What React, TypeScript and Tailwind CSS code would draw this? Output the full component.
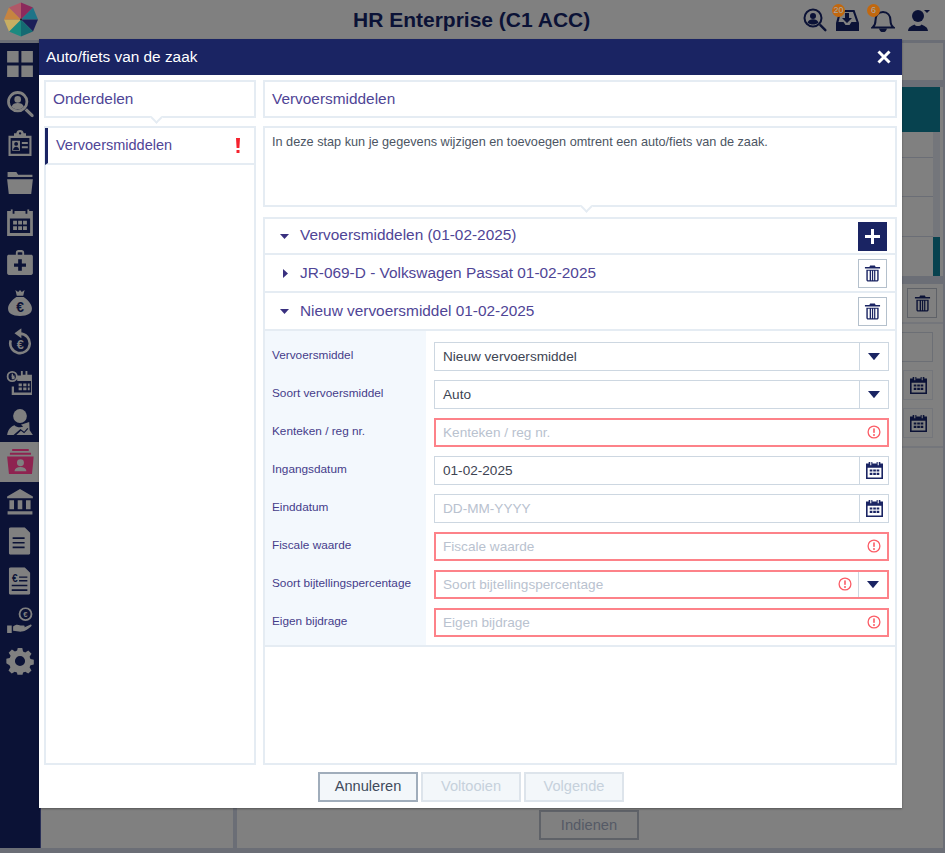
const NAVY = "#1a2463";

function Trash({ color = NAVY, size = 17 }: { color?: string; size?: number }) {
  return (
    <svg width={size} height={size} viewBox="0 0 18 18" fill={color}>
      <path d="M6.500 0.500h5l.8 1.700H17v1.600H1V2.200h4.700z" />
      <path d="M2.500 5h13v10.500c0 1.200-.8 2-2 2h-9c-1.200 0-2-.8-2-2zM4 6.200v9.300c0 .4.200.7.600.7H6V6.200zM7.400 6.200v10h1V6.200zM9.700 6.200v10h1V6.200zM12 6.200v10h1.400c.4 0 .6-.3.600-.7V6.200z" fillRule="evenodd" />
    </svg>
  );
}

function Calendar({ size = 17, color = NAVY }: { size?: number; color?: string }) {
  return (
    <svg width={size} height={size} viewBox="0 0 16 16" fill={color}>
      <path fillRule="evenodd" d="M0 1.500h2.500V0H4v3h1V0h1v1.500h4V0h1v3h1V0h1.500v1.500H16V16H0zM1.500 5.500v9h13v-9z" />
      <path d="M3.500 7h2.500v2H3.500zM6.800 7h2.500v2H6.800zM10 7h2.500v2H10zM3.500 10.200h2.500v2H3.500zM6.800 10.200h2.500v2H6.800zM10 10.200h2.500v2H10z" />
    </svg>
  );
}

function AlertCircle() {
  return (
    <svg width="14" height="14" viewBox="0 0 14 14" className="shrink-0 -mt-[1px]">
      <circle cx="7" cy="7" r="5.900" fill="none" stroke="#fb5c66" strokeWidth="1.300" />
      <rect x="6.200" y="3.200" width="1.600" height="4.800" rx="0.700" fill="#fb5c66" />
      <circle cx="7" cy="9.900" r="1" fill="#fb5c66" />
    </svg>
  );
}

function CaretDown({ size = 12 }: { size?: number }) {
  return (
    <svg width={size} height={size * 0.6} viewBox="0 0 10 6" fill={NAVY}>
      <path d="M0 0h10L5 6z" />
    </svg>
  );
}

const logoColors = ["#8c2a5c", "#1e7488", "#1c1f58", "#146a72", "#1c8a80", "#c8ae62", "#c68440", "#b05868"];

function Logo() {
  const cx = 21;
  const cy = 20.500;
  const r = 17;
  return (
    <svg width="42" height="42" viewBox="0 0 42 42">
      {logoColors.map((fill, i) => {
        const a1 = ((i * 45 - 90) * Math.PI) / 180;
        const a2 = (((i + 1) * 45 - 90) * Math.PI) / 180;
        const d = `M${cx} ${cy}L${cx + r * Math.cos(a1)} ${cy + r * Math.sin(a1)}L${cx + r * Math.cos(a2)} ${cy + r * Math.sin(a2)}Z`;
        return <path key={i} d={d} fill={fill} />;
      })}
      <circle cx={cx} cy={cy} r="1" fill="#222" />
    </svg>
  );
}

const G = "#808080";

function SideIcon({ id }: { id: number }) {
  const s = { width: 30, height: 30, viewBox: "0 0 30 30", fill: G };
  switch (id) {
    case 0:
      return (
        <svg {...s}>
          <path d="M1 1h12.500v12.500H1zM16.500 1H29v12.500H16.500zM1 16.500h12.500V29H1zM16.500 16.500H29V29H16.500z" />
        </svg>
      );
    case 1:
      return (
        <svg {...s}>
          <circle cx="12.500" cy="12.500" r="10" fill="none" stroke={G} strokeWidth="3" />
          <circle cx="12.500" cy="10" r="3.600" />
          <path d="M5.800 18c1-3 3.500-4 6.700-4s5.700 1 6.700 4c-1.800 1.800-4 2.800-6.700 2.800S7.600 19.800 5.800 18z" />
          <path d="M20 22l2.500-2.500 7 7c.7.700.7 1.700 0 2.400s-1.700.7-2.400 0z" />
        </svg>
      );
    case 2:
      return (
        <svg {...s}>
          <path
            fillRule="evenodd"
            d="M11 4.500C11 2 13 .8 15 .8S19 2 19 4.500h2.500V7h6V29H2.500V7h6V4.500zM13.800 4.500a1.300 1.300 0 1 0 2.600 0 1.300 1.300 0 1 0-2.600 0zM4.800 9.500v17.200h20.400V9.500z"
          />
          <path d="M6.500 12.500h8.500v11H6.500zM17 14h6.500v2.200H17zM17 18.500h6.500v2.200H17z" />
          <circle cx="10.800" cy="16" r="2.100" fill="#0b1236" />
          <path d="M7.500 22.500c.3-2.500 1.800-3.500 3.300-3.500s3 1 3.300 3.500z" fill="#0b1236" />
        </svg>
      );
    case 3:
      return (
        <svg {...s}>
          <path d="M1.500 3h9.500l2 3h15.500v2.500H1.500zM1 11h28l-1.800 16H2.800z" />
        </svg>
      );
    case 4:
      return (
        <svg {...s}>
          <path fillRule="evenodd" d="M1 2h4V0h2v5h2V2h12v3h2V0h2v2h4v27H1zM4 10v16h22V10z" />
          <path d="M7.500 12.500h4.200v4H7.500zM13 12.500h4.200v4H13zM18.300 12.500h4.200v4h-4.200zM7.500 18.500h4.200v4H7.500zM13 18.500h4.200v4H13zM18.300 18.500h4.200v4h-4.200z" />
        </svg>
      );
    case 5:
      return (
        <svg {...s}>
          <path
            fillRule="evenodd"
            d="M10.500 6V3.500C10.500 1.500 12 1 15 1s4.500.5 4.500 2.500V6H27c1.300 0 2 .8 2 2v18c0 1.300-.8 2-2 2H3c-1.300 0-2-.8-2-2V8c0-1.300.8-2 2-2zM12.500 6h5V3.600c-1.500-.4-3.500-.4-5 0zM13 11v4.500H8.500V19H13v4.500h4V19h4.500v-3.500H17V11z"
          />
        </svg>
      );
    case 6:
      return (
        <svg {...s}>
          <path d="M10 1l3 2 2-2 2 2 3-2-1.500 6h-7zM11 8.500h8C24 12 28 16.500 28 21c0 5.500-4.500 8-13 8S2 26.500 2 21c0-4.500 4-9 9-12.500z" />
          <text x="15" y="25" textAnchor="middle" fontSize="15" fontWeight="700" fontFamily="Liberation Sans, sans-serif" fill="#0b1236">€</text>
        </svg>
      );
    case 7:
      return (
        <svg {...s}>
          <path d="M15 4.500a12 12 0 1 1-11.400 8.200l2.700.9A9.200 9.200 0 1 0 15 7.300z" />
          <path d="M16.500 0v11L9 5.500z" />
          <text x="15.500" y="22.500" textAnchor="middle" fontSize="14" fontWeight="700" fontFamily="Liberation Sans, sans-serif" fill={G}>€</text>
        </svg>
      );
    case 8:
      return (
        <svg {...s}>
          <path fillRule="evenodd" d="M6 8h3v4h2V8h5V3h2v4h3V3h2v4h5v22H6v-9h2.500v6.500h18.500V14H12v-2H6z" />
          <path d="M13.500 16.500h3.500v3h-3.500zM18.500 16.500h3.500v3h-3.500zM23.500 16.500h2v3h-2zM13.500 21h3.500v3h-3.500zM18.500 21h3.500v3h-3.500zM23.500 21h2v3h-2z" />
          <path fillRule="evenodd" d="M6.500 3a6 6 0 1 1 0 12 6 6 0 0 1 0-12zM6.500 5a4 4 0 1 0 0 8 4 4 0 0 0 0-8zM6 6h1.400v3l2 1.200-.7 1.100L6 9.700z" />
        </svg>
      );
    case 9:
      return (
        <svg {...s}>
          <circle cx="15" cy="8.500" r="7.500" />
          <path d="M1 29c1-6 4-9 8-10.500 1.500 1.500 3.500 2.200 6 2.200 1.500 0 2.500-.3 3.500-.7L16 18l9-3 .5 9-2.500-2.500-3.500 4-4-3L8 29zM11 29l5-4.500 3.500 2.800 4.800-5.300L29 29z" />
        </svg>
      );
    case 10:
      return (
        <svg width={30} height={30} viewBox="0 0 30 30">
          <path d="M6.500 1h18v2h-18zM4 5h23v2.200H4z" fill="#8e2350" />
          <path
            fillRule="evenodd"
            fill="#8e2350"
            d="M1 9h29l-2 19H3zM15.500 12a3.800 3.800 0 1 0 0 7.600 3.800 3.800 0 0 0 0-7.600zM9 25c.3-3 3-4.500 6.500-4.500S21.700 22 22 25z"
          />
        </svg>
      );
    case 11:
      return (
        <svg {...s}>
          <path d="M15 1l14 8v2H1V9zM3.500 13h5v10h-5zM12.500 13h5v10h-5zM21.500 13h5v10h-5zM1.500 25h27v3.500h-27z" />
        </svg>
      );
    case 12:
      return (
        <svg {...s}>
          <path fillRule="evenodd" d="M5 0h15l6 6v22c0 1.200-.8 2-2 2H5c-1.200 0-2-.8-2-2V2c0-1.200.8-2 2-2zM7 11v1.800h13V11zM7 16v1.800h13V16zM7 21v1.800h13V21z" />
        </svg>
      );
    case 13:
      return (
        <svg {...s}>
          <path fillRule="evenodd" d="M5 0h15l6 6v22c0 1.200-.8 2-2 2H5c-1.200 0-2-.8-2-2V2c0-1.200.8-2 2-2zM14 10v1.600h9V10zM14 14v1.600h9V14zM6 19v1.800h17V19zM6 24v1.800h17V24z" />
          <text x="9.500" y="16" textAnchor="middle" fontSize="11" fontWeight="700" fontFamily="Liberation Sans, sans-serif" fill="#0b1236">€</text>
        </svg>
      );
    case 14:
      return (
        <svg {...s}>
          <path fillRule="evenodd" d="M21 0a7.500 7.500 0 1 1 0 15 7.500 7.500 0 0 1 0-15zM21 2a5.500 5.500 0 1 0 0 11 5.500 5.500 0 0 0 0-11z" />
          <text x="21" y="11" textAnchor="middle" fontSize="8.500" fontWeight="700" fontFamily="Liberation Sans, sans-serif" fill={G}>€</text>
          <path d="M1 20h5v8H1zM7.500 21c3-2.500 5-2 8-1h3.500c1.500 0 1.500 2 0 2.200l-4 .3 5-.8 6-2.700c1.500-.5 2.300 1 1 2-3 2.500-6 5-10 5.500-3 .3-6-.5-9.500-.8z" />
        </svg>
      );
    default:
      return (
        <svg {...s}>
          <path
            fillRule="evenodd"
            d="M12.500 1h5l.8 3.800 2.400 1 3.300-2.100 3.500 3.500-2.100 3.300 1 2.400 3.800.8v5l-3.800.8-1 2.400 2.100 3.300-3.500 3.500-3.300-2.100-2.400 1-.8 3.800h-5l-.8-3.800-2.400-1-3.300 2.100-3.500-3.500 2.100-3.300-1-2.400L0 17.500v-5l3.800-.8 1-2.400L2.700 6l3.500-3.500 3.300 2.100 2.400-1zM15 9.500a5.500 5.500 0 1 0 0 11 5.500 5.500 0 0 0 0-11z"
          />
        </svg>
      );
  }
}

function Sidebar() {
  return (
    <div className="w-[41px] shrink-0 bg-[#0b1236] mt-[3px] mb-[5px] pt-[1px] flex flex-col border-r border-[#2a3058]">
      {Array.from({ length: 16 }).map((_, i) => (
        <div key={i} className={`h-[39.8px] flex items-center justify-center ${i === 10 ? "bg-[#808080]" : ""}`}>
          <div className="w-[28px] h-[28px] flex items-center justify-center overflow-hidden">
            <div className="scale-[0.92]">
              <SideIcon id={i} />
            </div>
          </div>
        </div>
      ))}
    </div>
  );
}

function HeaderIcons() {
  return (
    <div className="flex items-center pr-[14px]">
      <svg width="24" height="24" viewBox="0 0 24 24" fill="#0b1236" className="mr-[8px]">
        <circle cx="10" cy="10" r="8.500" fill="none" stroke="#0b1236" strokeWidth="2" />
        <circle cx="10" cy="8" r="3" />
        <path d="M4.500 14.500c1-2.500 3-3.200 5.500-3.200s4.500.7 5.500 3.200c-1.500 1.400-3.300 2-5.500 2s-4-.6-5.500-2z" />
        <path d="M16 17.500l1.700-1.700 5.500 5.500c.5.500.5 1.200 0 1.700s-1.200.5-1.700 0z" />
      </svg>
      <div className="relative w-[24px] h-[24px] mr-[12px]">
        <svg width="24" height="24" viewBox="0 0 24 24" fill="#0b1236">
          <path fillRule="evenodd" d="M4.500 2h15L24 15v8H1v-8zM6 4l-2.500 10h5l2 3h4l2-3h5L18 4z" />
          <path d="M10 5h4v5h3l-5 5-5-5h3z" />
        </svg>
        <span className="absolute -left-[3px] -top-[4px] w-[13px] h-[13px] rounded-full bg-[#c2680f] text-[9px] leading-[13px] text-center text-[#a8a8a8]">20</span>
      </div>
      <div className="relative w-[24px] h-[24px] mr-[12px]">
        <svg width="24" height="24" viewBox="0 0 24 24" fill="none" stroke="#0b1236" strokeWidth="2">
          <path d="M1.500 19.500c2-1.500 3-3.500 3-7 0-5 3-8.500 7.500-8.500s7.500 3.500 7.500 8.500c0 3.500 1 5.500 3 7z" />
          <path d="M9.500 21.500c.5 1.200 1.500 1.800 2.500 1.800s2-.6 2.500-1.800z" fill="#0b1236" />
        </svg>
        <span className="absolute -left-[4px] -top-[4px] w-[13px] h-[13px] rounded-full bg-[#c2680f] text-[9px] leading-[13px] text-center text-[#a8a8a8]">6</span>
      </div>
      <svg width="24" height="24" viewBox="0 0 24 24" fill="#0b1236">
        <circle cx="11" cy="8" r="6" />
        <path d="M1 23c.5-4.500 4-5 6.500-6.500.7 1 2 1.500 3.500 1.500s2.800-.5 3.500-1.500c2.500 1.500 6 2 6.500 6.500z" />
        <path d="M17 2h6l-3 3z" />
      </svg>
    </div>
  );
}

// the dimmed page behind the dialog
function PageBehind() {
  return (
    <div className="flex-1 flex flex-col min-w-0 mt-[3px] mb-[5px] mr-[2px]">
      <div className="h-[37px] shrink-0 bg-[#808080] mb-[7px]" />
      <div className="h-[45px] shrink-0 bg-[#808080] flex justify-end pr-[3px]">
        <div className="w-[720px] bg-[#07424f]" />
      </div>
      <div className="h-[144px] shrink-0 bg-[#808080] flex pr-[3px]">
        <div className="flex-1 flex flex-col">
          <div className="h-[26px] border-b border-[#6b6e76]" />
          <div className="h-[39px] border-b border-[#6b6e76]" />
          <div className="h-[40px] border-b border-[#6b6e76]" />
        </div>
        <div className="w-[7px] bg-[#74767b] flex flex-col justify-end">
          <div className="h-[39px] bg-[#07424f]" />
        </div>
      </div>
      <div className="h-[8px] shrink-0" />
      <div className="h-[40px] shrink-0 bg-[#808080] flex justify-end pt-[4px] pr-[6px] border-b-2 border-[#74767b]">
        <div className="w-[30px] h-[30px] border border-[#5f6268] flex items-center justify-center">
          <Trash color="#0b1236" />
        </div>
      </div>
      <div className="h-[124px] shrink-0 bg-[#808080] flex justify-end pt-[8px] pr-[10px] border-b-2 border-[#74767b]">
        <div className="w-[60px] flex flex-col gap-[8px] items-end">
          <div className="w-[60px] h-[30px] border border-[#6c6f75]" />
          <div className="w-[30px] h-[30px] border border-[#74767b] flex items-center justify-center">
            <Calendar color="#0b1236" />
          </div>
          <div className="w-[30px] h-[30px] border border-[#74767b] flex items-center justify-center">
            <Calendar color="#0b1236" />
          </div>
        </div>
      </div>
      <div className="flex-1 flex">
        <div className="w-[192px] bg-[#808080]" />
        <div className="w-[4px]" />
        <div className="flex-1 bg-[#808080] flex flex-col justify-end pb-[8px]">
          <div className="ml-[302px] w-[100px] h-[30px] border-2 border-[#5f6268] text-[14.700px] text-[#555a66] flex items-center justify-center">Indienen</div>
        </div>
      </div>
    </div>
  );
}

type Field = {
  label: string;
  value?: string;
  placeholder?: string;
  error?: boolean;
  select?: boolean;
  date?: boolean;
};

const fields: Field[] = [
  { label: "Vervoersmiddel", value: "Nieuw vervoersmiddel", select: true },
  { label: "Soort vervoersmiddel", value: "Auto", select: true },
  { label: "Kenteken / reg nr.", placeholder: "Kenteken / reg nr.", error: true },
  { label: "Ingangsdatum", value: "01-02-2025", date: true },
  { label: "Einddatum", placeholder: "DD-MM-YYYY", date: true },
  { label: "Fiscale waarde", placeholder: "Fiscale waarde", error: true },
  { label: "Soort bijtellingspercentage", placeholder: "Soort bijtellingspercentage", error: true, select: true },
  { label: "Eigen bijdrage", placeholder: "Eigen bijdrage", error: true },
];

function FieldRow({ f }: { f: Field }) {
  return (
    <div className="flex h-[38px] shrink-0">
      <div className="w-[161px] shrink-0 bg-[#f3f8fd] pl-[7px] pt-[4px] text-[11.800px] leading-[18px] text-[#453c8a]">{f.label}</div>
      <div className="flex-1 pl-[8px] pr-[6px] bg-white">
        <div className={`h-[29px] flex items-stretch bg-white ${f.error ? "border-2 border-[#fd8289]" : "border border-[#cdd7e1]"}`}>
          <div className={`flex-1 flex items-center pr-[6px] text-[13.600px] ${f.error ? "pl-[7px]" : "pl-[8px]"} ${f.value ? "text-[#3d4452]" : "text-[#b9c2cf]"}`}>
            <span className="flex-1 pt-[2px]">{f.value ?? f.placeholder}</span>
            {f.error && <AlertCircle />}
          </div>
          {f.select && (
            <div className="w-[29px] flex items-center justify-center border-l border-[#cdd7e1]">
              <CaretDown />
            </div>
          )}
          {f.date && (
            <div className="w-[29px] flex items-center justify-center border-l border-[#cdd7e1]">
              <Calendar />
            </div>
          )}
        </div>
      </div>
    </div>
  );
}

function AccordionRow({ title, open, plus, first }: { title: string; open: boolean; plus?: boolean; first?: boolean }) {
  return (
    <div className={`flex items-center border-b-2 border-[#e5ecf3] pl-[15px] pr-[8px] ${first ? "h-[36px]" : "h-[38px]"}`}>
      {open ? (
        <svg width="9" height="5" viewBox="0 0 9 5" fill="#39307f" className="mr-[11px]">
          <path d="M0 0h9L4.500 5z" />
        </svg>
      ) : (
        <svg width="5" height="9" viewBox="0 0 5 9" fill="#39307f" className="ml-[3px] mr-[12px]">
          <path d="M0 0v9l5-4.500z" />
        </svg>
      )}
      <span className={`flex-1 text-[15.400px] text-[#4f4596] ${first ? "-mt-[2px]" : ""}`}>{title}</span>
      {plus ? (
        <div className="w-[29px] h-[29px] bg-[#1a2463] flex items-center justify-center">
          <svg width="15" height="15" viewBox="0 0 15 15" fill="white">
            <path d="M6 0h3v6h6v3H9v6H6V9H0V6h6z" />
          </svg>
        </div>
      ) : (
        <div className="w-[29px] h-[29px] border border-[#b4c0cc] bg-white flex items-center justify-center">
          <Trash />
        </div>
      )}
    </div>
  );
}

// small triangular tip under a header panel
function Notch({ className }: { className: string }) {
  return <div className={`absolute w-[9px] h-[9px] rotate-45 bg-white border-r-2 border-b-2 border-[#e5ecf3] ${className}`} />;
}

function Dialog() {
  return (
    <div className="absolute left-[39px] top-[39px] w-[863px] h-[769px] bg-white flex flex-col font-['Liberation_Sans',sans-serif] shadow-[0_1px_2px_rgba(0,0,0,0.35)]">
      <div className="h-[36px] shrink-0 bg-[#1a2463] flex items-center justify-between pl-[7px] pr-[11px]">
        <span className="text-[15.400px] text-white">Auto/fiets van de zaak</span>
        <svg width="14" height="14" viewBox="0 0 14 14" stroke="white" strokeWidth="3">
          <path d="M1.500 1.500l11 11M12.500 1.500l-11 11" />
        </svg>
      </div>
      <div className="flex-1 flex gap-[7px] px-[5px] pt-[5px] min-h-0">
        <div className="w-[212px] shrink-0 flex flex-col gap-[8px]">
          <div className="relative h-[38px] border-2 border-[#e5ecf3] flex items-center pl-[7px] text-[15.400px] text-[#4f4596]">
            Onderdelen
            <Notch className="left-[106px] -bottom-[6px]" />
          </div>
          <div className="h-[639px] border-2 border-[#e5ecf3]">
            <div className="h-[37px] -ml-[1px] flex items-center border-l-[3px] border-[#1a2463] border-b-2 border-b-[#e5ecf3] pl-[8px] pr-[14px] text-[14.500px] text-[#4f4596]">
              <span className="flex-1">Vervoersmiddelen</span>
              <svg width="4" height="15" viewBox="0 0 4 15" fill="#f5222d">
                <path d="M0 0h4l-.6 10H.6zM.5 12h3v3h-3z" />
              </svg>
            </div>
          </div>
        </div>
        <div className="flex-1 min-w-0 flex flex-col">
          <div className="h-[38px] border-2 border-[#e5ecf3] flex items-center pl-[7px] text-[15.400px] text-[#4f4596]">Vervoersmiddelen</div>
          <div className="relative h-[81px] mt-[8px] border-2 border-[#e5ecf3] pl-[7px] pt-[5px] text-[12.700px] leading-[18px] text-[#4b5563]">
            In deze stap kun je gegevens wijzigen en toevoegen omtrent een auto/fiets van de zaak.
            <Notch className="left-[317px] -bottom-[6px]" />
          </div>
          <div className="h-[548px] mt-[10px] border-2 border-[#e5ecf3]">
            <AccordionRow title="Vervoersmiddelen (01-02-2025)" open plus first />
            <AccordionRow title="JR-069-D - Volkswagen Passat 01-02-2025" open={false} />
            <AccordionRow title="Nieuw vervoersmiddel 01-02-2025" open />
            <div className="h-[316px] pt-[11px] border-b-2 border-[#e5ecf3] flex flex-col relative overflow-hidden">
              <div className="absolute left-0 top-0 w-[161px] h-[11px] bg-[#f3f8fd]" />
              {fields.map((f) => (
                <FieldRow key={f.label} f={f} />
              ))}
            </div>
          </div>
        </div>
      </div>
      <div className="h-[43px] shrink-0 flex justify-center gap-[3px] pt-[7px] pl-[1px]">
        <button className="w-[100px] h-[30px] border-2 border-[#a0adbb] bg-[#f3f7fa] text-[14.600px] text-[#3f4a5c]">Annuleren</button>
        <button className="w-[100px] h-[30px] border-2 border-[#dde4eb] bg-[#f3f7fa] text-[14.600px] text-[#c6d1dc]">Voltooien</button>
        <button className="w-[100px] h-[30px] border-2 border-[#dde4eb] bg-[#f3f7fa] text-[14.600px] text-[#c6d1dc]">Volgende</button>
      </div>
    </div>
  );
}

export default function App() {
  return (
    <div className="relative w-[945px] h-[853px] overflow-hidden bg-[#6b6e76] flex flex-col font-['Liberation_Sans',sans-serif]">
      <div className="h-[40px] shrink-0 bg-[#808080] flex items-center relative">
        <Logo />
        <h1 className="absolute left-[353px] text-[21px] font-bold text-[#0b1236] leading-[40px]">HR Enterprise (C1 ACC)</h1>
        <div className="ml-auto">
          <HeaderIcons />
        </div>
      </div>
      <div className="flex-1 flex min-h-0">
        <Sidebar />
        <PageBehind />
      </div>
      <Dialog />
    </div>
  );
}
